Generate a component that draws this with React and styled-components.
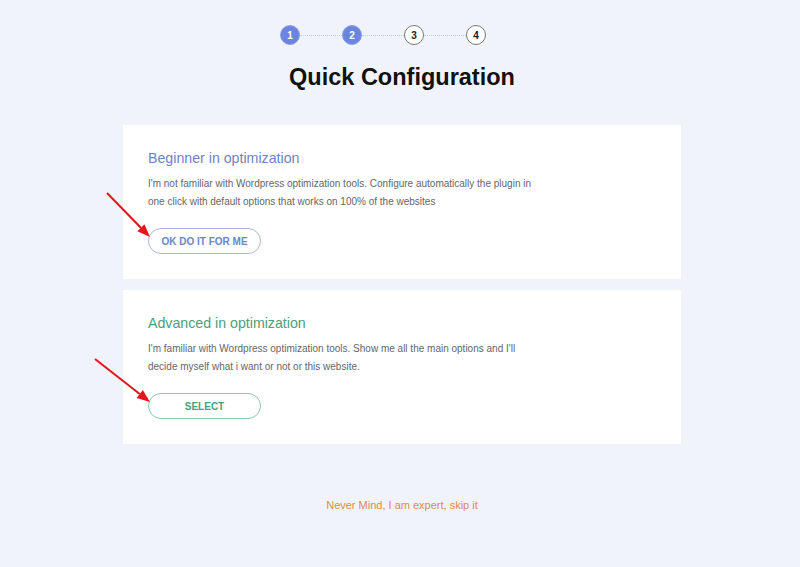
import React from 'react';
import styled, { createGlobalStyle } from 'styled-components';

const GlobalStyle = createGlobalStyle`
  body {
    margin: 0;
    background: #f0f4fa;
    font-family: "Liberation Sans", Arial, sans-serif;
  }
`;

const Page = styled.div`
  width: 800px;
  min-height: 567px;
  display: flex;
  flex-direction: column;
  align-items: center;
  padding-top: 25px;
  box-sizing: border-box;
`;

const Steps = styled.div`
  display: flex;
  align-items: center;
  margin-left: -34px;
`;

const Step = styled.div`
  width: 20px;
  height: 20px;
  box-sizing: border-box;
  border-radius: 50%;
  display: flex;
  align-items: center;
  justify-content: center;
  font-size: 10px;
  font-weight: 700;
  border: 1px solid ${(p) => (p.active ? '#8ea0e6' : '#777')};
  background: ${(p) => (p.active ? '#6b84e0' : '#fff')};
  color: ${(p) => (p.active ? '#fff' : '#222')};
`;

const Connector = styled.div`
  width: 42px;
  border-top: 1px dotted #c9cfd8;
`;

const Title = styled.h1`
  margin: 17px 0 0 4px;
  font-size: 23.5px;
  font-weight: 700;
  color: #111;
  line-height: 30px;
`;

const Cards = styled.div`
  margin-top: 33px;
  margin-left: 4px;
  display: flex;
  flex-direction: column;
  gap: 11px;
`;

const Card = styled.div`
  width: 558px;
  height: 154px;
  box-sizing: border-box;
  background: #fff;
  padding: 24px 25px 0;
`;

const Heading = styled.h2`
  margin: 0;
  font-size: 14.2px;
  font-weight: 400;
  line-height: 18px;
  color: ${(p) => p.color};
`;

const Text = styled.p`
  margin: 8px 0 0;
  max-width: 395px;
  font-size: 10px;
  line-height: 18px;
  color: #666;
`;

const ButtonWrap = styled.div`
  position: relative;
  margin-top: 17px;
  width: 113px;
`;

const Button = styled.button`
  width: 113px;
  height: 26px;
  border-radius: 13px;
  background: #fff;
  border: 1px solid ${(p) => p.border};
  color: ${(p) => p.color};
  font-family: "Liberation Sans", Arial, sans-serif;
  font-size: 10px;
  font-weight: 700;
  padding: 0;
  cursor: pointer;
`;

const ArrowSvg = styled.svg`
  position: absolute;
  left: -60px;
  top: -40px;
  width: 66px;
  height: 56px;
  overflow: visible;
  pointer-events: none;
`;

const Skip = styled.a`
  margin-top: 55px;
  margin-left: 4px;
  font-size: 11px;
  color: #e0894e;
  text-decoration: none;
`;

function Arrow({ x, y }) {
  // tip sits at (62, 49) in the svg box
  const tx = 62;
  const ty = 49;
  const dx = tx - x;
  const dy = ty - y;
  const len = Math.sqrt(dx * dx + dy * dy);
  const ux = dx / len;
  const uy = dy / len;
  const bx = tx - ux * 13;
  const by = ty - uy * 13;
  const px = -uy * 5;
  const py = ux * 5;
  return (
    <ArrowSvg viewBox="0 0 66 56">
      <line x1={x} y1={y} x2={bx} y2={by} stroke="#e3161b" strokeWidth="2" />
      <polygon
        points={`${tx},${ty} ${bx + px},${by + py} ${bx - px},${by - py}`}
        fill="#e3161b"
      />
    </ArrowSvg>
  );
}

const options = [
  {
    title: 'Beginner in optimization',
    color: '#6c84c8',
    border: '#aab6dc',
    text: "I'm not familiar with Wordpress optimization tools. Configure automatically the plugin in one click with default options that works on 100% of the websites",
    label: 'OK DO IT FOR ME',
    arrow: { x: 19, y: 5 },
  },
  {
    title: 'Advanced in optimization',
    color: '#4aa07c',
    border: '#8cc6ad',
    text: "I'm familiar with Wordpress optimization tools. Show me all the main options and I'll decide myself what i want or not or this website.",
    label: 'SELECT',
    arrow: { x: 7, y: 6 },
  },
];

export default function App() {
  return (
    <>
      <GlobalStyle />
      <Page>
        <Steps>
          <Step active>1</Step>
          <Connector />
          <Step active>2</Step>
          <Connector />
          <Step>3</Step>
          <Connector />
          <Step>4</Step>
        </Steps>
        <Title>Quick Configuration</Title>
        <Cards>
          {options.map((o) => (
            <Card key={o.label}>
              <Heading color={o.color}>{o.title}</Heading>
              <Text>{o.text}</Text>
              <ButtonWrap>
                <Button color={o.color} border={o.border}>
                  {o.label}
                </Button>
                <Arrow x={o.arrow.x} y={o.arrow.y} />
              </ButtonWrap>
            </Card>
          ))}
        </Cards>
        <Skip href="#">Never Mind, I am expert, skip it</Skip>
      </Page>
    </>
  );
}
